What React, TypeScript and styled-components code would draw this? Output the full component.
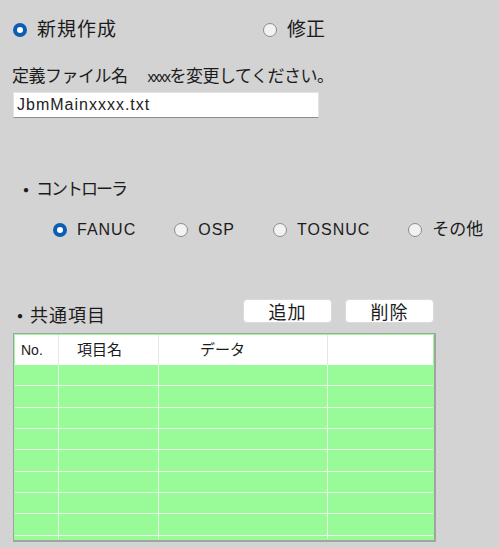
import * as React from 'react'
import styled, { createGlobalStyle } from 'styled-components'

const GlobalStyle = createGlobalStyle`
    html, body {
        margin: 0;
        padding: 0;
        background: #d3d3d3;
    }
    body {
        font-family: "Liberation Sans", "Noto Sans CJK JP", sans-serif;
        color: #1b1b1b;
    }
`

const Page = styled.div`
    display: flex;
    flex-direction: column;
    width: 499px;
    height: 548px;
    padding-left: 10px;
    box-sizing: border-box;
    overflow: hidden;
`

const ModeRow = styled.div`
    display: flex;
    align-items: center;
    height: 20px;
    margin-top: 20px;
    padding-left: 3px;
`

const Option = styled.label<{ width?: number }>`
    display: flex;
    align-items: center;
    gap: 10px;
    width: ${(p) => (p.width ? `${p.width}px` : 'auto')};
    flex: none;
`

const RadioDot = styled.span<{ checked?: boolean }>`
    width: 14px;
    height: 14px;
    border-radius: 50%;
    box-sizing: border-box;
    flex: none;
    background: ${(p) => (p.checked ? '#fff' : '#f2f2f2')};
    border: ${(p) => (p.checked ? '4.5px solid #0a5fb4' : '1px solid #8c8c8c')};
`

const OptionText = styled.span<{ size: number; spacing?: number }>`
    font-size: ${(p) => p.size}px;
    letter-spacing: ${(p) => p.spacing ?? 0}px;
    line-height: 20px;
    white-space: nowrap;
`

const FileLabel = styled.div`
    margin-top: 27px;
    padding-left: 2px;
    height: 20px;
    line-height: 20px;
    font-size: 17px;
    letter-spacing: -0.5px;
    white-space: nowrap;
`

const Hint = styled.span`
    margin-left: 20px;
`

const Small = styled.span`
    font-size: 14px;
    letter-spacing: -1.5px;
`

const FileInput = styled.div`
    margin-top: 5px;
    margin-left: 3px;
    width: 306px;
    height: 26px;
    box-sizing: border-box;
    background: #fff;
    border: 1px solid #e2e2e2;
    border-bottom-color: #8e8e8e;
    padding-left: 3px;
    font-size: 16px;
    letter-spacing: 1px;
    line-height: 24px;
    color: #222;
`

const SectionTitle = styled.div<{ indent: number; mt: number }>`
    display: flex;
    align-items: center;
    height: 20px;
    margin-top: ${(p) => p.mt}px;
    padding-left: ${(p) => p.indent}px;
`

const Bullet = styled.span`
    width: 14px;
    text-align: center;
    font-size: 20px;
    line-height: 20px;
    font-family: "Noto Sans CJK JP", sans-serif;
    flex: none;
`

const TitleText = styled.span<{ size: number; spacing: number }>`
    margin-left: 6px;
    font-size: ${(p) => p.size}px;
    letter-spacing: ${(p) => p.spacing}px;
    line-height: 20px;
    white-space: nowrap;
`

const ControllerRow = styled.div`
    display: flex;
    align-items: center;
    gap: 38px;
    height: 20px;
    margin-top: 20px;
    padding-left: 43px;
`

const CommonHeader = styled.div`
    display: flex;
    align-items: flex-start;
    height: 34px;
    margin-top: 59px;
`

const CommonTitle = styled(SectionTitle)`
    width: 233px;
    flex: none;
`

const Buttons = styled.div`
    display: flex;
    gap: 13px;
`

const ActionButton = styled.button`
    width: 89px;
    height: 24px;
    padding: 0;
    background: #fff;
    border: 1px solid #dadada;
    border-radius: 4px;
    font-family: "Noto Sans CJK JP", sans-serif;
    font-size: 18px;
    letter-spacing: 1px;
    line-height: 22px;
    color: #1b1b1b;
`

const Table = styled.div`
    margin-left: 3px;
    width: 423px;
    box-sizing: border-box;
    border: 1px solid #a3a3a3;
    border-right-width: 2px;
    border-bottom-width: 2px;
    padding: 1px;
    background: #98fb98;
`

const GridRow = styled.div<{ header?: boolean }>`
    display: grid;
    grid-template-columns: 44px 100px 169px 1fr;
    height: ${(p) => (p.header ? '30px' : '21.33px')};
    box-sizing: border-box;
    background: ${(p) => (p.header ? '#fff' : 'transparent')};
    border-bottom: ${(p) => (p.header ? 'none' : '1px solid #e9fae9')};
`

const Body = styled.div`
    height: 174px;
    overflow: hidden;
`

const Cell = styled.div<{ pad?: number; header?: boolean; last?: boolean }>`
    padding-left: ${(p) => p.pad ?? 0}px;
    border-right: ${(p) => (p.last ? 'none' : `1px solid ${p.header ? '#e6e6e6' : '#e9fae9'}`)};
    font-size: 15px;
    line-height: 30px;
    white-space: nowrap;
`

const HeadNo = styled.span`
    font-size: 14px;
`

const columns = [
    { label: <HeadNo>No.</HeadNo>, pad: 6 },
    { label: '項目名', pad: 18 },
    { label: 'データ', pad: 41 },
    { label: '', pad: 0 },
]

export default function App() {
    const rows = Array.from({ length: 9 })

    return (
        <>
            <GlobalStyle />
            <Page>
                <ModeRow>
                    <Option width={250}>
                        <RadioDot checked />
                        <OptionText size={19} spacing={1}>新規作成</OptionText>
                    </Option>
                    <Option>
                        <RadioDot />
                        <OptionText size={19}>修正</OptionText>
                    </Option>
                </ModeRow>

                <FileLabel>
                    定義ファイル名
                    <Hint><Small>xxxx</Small>を変更してください。</Hint>
                </FileLabel>
                <FileInput>JbmMainxxxx.txt</FileInput>

                <SectionTitle indent={6} mt={62}>
                    <Bullet>・</Bullet>
                    <TitleText size={17} spacing={-2}>コントローラ</TitleText>
                </SectionTitle>

                <ControllerRow>
                    <Option>
                        <RadioDot checked />
                        <OptionText size={16} spacing={1}>FANUC</OptionText>
                    </Option>
                    <Option>
                        <RadioDot />
                        <OptionText size={16} spacing={1}>OSP</OptionText>
                    </Option>
                    <Option>
                        <RadioDot />
                        <OptionText size={16} spacing={1}>TOSNUC</OptionText>
                    </Option>
                    <Option>
                        <RadioDot />
                        <OptionText size={17}>その他</OptionText>
                    </Option>
                </ControllerRow>

                <CommonHeader>
                    <CommonTitle indent={0} mt={7}>
                        <Bullet>・</Bullet>
                        <TitleText size={18} spacing={1}>共通項目</TitleText>
                    </CommonTitle>
                    <Buttons>
                        <ActionButton>追加</ActionButton>
                        <ActionButton>削除</ActionButton>
                    </Buttons>
                </CommonHeader>

                <Table>
                    <GridRow header>
                        {columns.map((c, i) => (
                            <Cell key={i} header pad={c.pad} last={i === columns.length - 1}>
                                {c.label}
                            </Cell>
                        ))}
                    </GridRow>
                    <Body>
                        {rows.map((_, r) => (
                            <GridRow key={r}>
                                {columns.map((c, i) => (
                                    <Cell key={i} last={i === columns.length - 1} />
                                ))}
                            </GridRow>
                        ))}
                    </Body>
                </Table>
            </Page>
        </>
    )
}
